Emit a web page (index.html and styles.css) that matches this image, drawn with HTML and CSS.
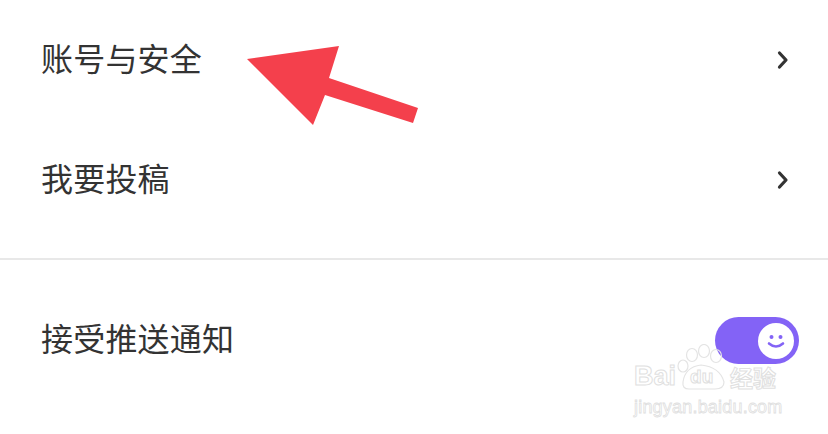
FILE: index.html
```html
<!DOCTYPE html>
<html lang="zh-CN">
<head>
<meta charset="utf-8">
<link rel="stylesheet" href="styles.css">
</head>
<body>
<div class="page">
  <section class="group">
    <div class="row">
      <span class="label">账号与安全</span>
      <svg class="chev" width="14" height="20" viewBox="0 0 14 20"><path d="M3.5 3 L10 10 L3.5 17" fill="none" stroke="#333" stroke-width="3.2" stroke-linecap="round" stroke-linejoin="round"/></svg>
    </div>
    <div class="row">
      <span class="label">我要投稿</span>
      <svg class="chev" width="14" height="20" viewBox="0 0 14 20"><path d="M3.5 3 L10 10 L3.5 17" fill="none" stroke="#333" stroke-width="3.2" stroke-linecap="round" stroke-linejoin="round"/></svg>
    </div>
  </section>
  <div class="divider"></div>
  <section class="group">
    <div class="row">
      <span class="label">接受推送通知</span>
      <div class="toggle">
        <div class="knob">
          <svg width="36" height="36" viewBox="0 0 36 36">
            <circle cx="13.5" cy="14" r="2" fill="#8363f6"/>
            <circle cx="22.5" cy="14" r="2" fill="#8363f6"/>
            <path d="M11 20.5 Q18 26.5 25 20.5" fill="none" stroke="#8363f6" stroke-width="2.6" stroke-linecap="round"/>
          </svg>
        </div>
      </div>
    </div>
  </section>
</div>

<svg class="arrow" width="828" height="434" viewBox="0 0 828 434">
  <polygon points="247,59 339,46 329,78 418,108 413,123 325,95 313,125" fill="#f4404c"/>
</svg>

<div class="watermark">
  <div class="wm-top">
    <span class="wm-bai">Bai</span>
    <span class="wm-paw">
      <svg width="54" height="46" viewBox="0 0 54 46">
        <ellipse cx="16" cy="11" rx="5.5" ry="6.5" fill="none" stroke="#e4e4e4" stroke-width="1.2"/>
        <ellipse cx="28" cy="7" rx="5.5" ry="6.5" fill="none" stroke="#e4e4e4" stroke-width="1.2"/>
        <ellipse cx="40" cy="12" rx="5.5" ry="6.5" fill="none" stroke="#e4e4e4" stroke-width="1.2"/>
        <ellipse cx="7" cy="22" rx="5" ry="6" fill="none" stroke="#e4e4e4" stroke-width="1.2"/>
        <path d="M7 38 Q9 23 25 21 Q44 23 48 38 Q48 45 39 45 L13 45 Q6 45 7 38 Z" fill="none" stroke="#e4e4e4" stroke-width="1.2"/>
      </svg>
      <span class="wm-du">du</span>
    </span>
    <span class="wm-cn">经验</span>
  </div>
  <div class="wm-url">jingyan.baidu.com</div>
</div>
</body>
</html>
```

FILE: styles.css
```css
html, body {
  margin: 0;
  padding: 0;
  background: #ffffff;
}

body {
  width: 828px;
  height: 434px;
  overflow: hidden;
  position: relative;
  font-family: "Noto Sans CJK SC", "Noto Sans", sans-serif;
}

.page {
  display: flex;
  flex-direction: column;
}

.group {
  display: flex;
  flex-direction: column;
}

.row {
  height: 120px;
  display: flex;
  align-items: center;
  justify-content: space-between;
  padding: 0 38px 0 41px;
}

.label {
  font-size: 32px;
  color: #333333;
  letter-spacing: 0.2px;
  margin-bottom: 6px;
}

.chev {
  display: block;
}

.divider {
  height: 2px;
  background: #e8e8e8;
  margin: 18px 0 20px;
}

.toggle {
  width: 84px;
  height: 47px;
  border-radius: 24px;
  background: #8363f6;
  display: flex;
  align-items: center;
  justify-content: flex-end;
  padding-right: 5px;
  box-sizing: border-box;
  margin-right: -9px;
  margin-top: 1px;
}

.knob {
  width: 36px;
  height: 36px;
  border-radius: 50%;
  background: #ffffff;
  display: flex;
}

.arrow {
  position: absolute;
  left: 0;
  top: 0;
  pointer-events: none;
}

.watermark {
  position: absolute;
  left: 634px;
  top: 342px;
  width: 160px;
  font-family: "Liberation Sans", Arial, sans-serif;
  color: transparent;
  pointer-events: none;
}

.wm-top {
  display: flex;
  align-items: flex-end;
  height: 48px;
}

.wm-bai {
  font-size: 27px;
  font-weight: bold;
  -webkit-text-stroke: 1px #e0e0e0;
  line-height: 1;
  margin-bottom: 0;
}

.wm-paw {
  position: relative;
  width: 54px;
  height: 46px;
  margin-left: 0;
}

.wm-paw svg {
  position: absolute;
  left: 0;
  top: 0;
}

.wm-du {
  position: absolute;
  left: 14px;
  top: 23px;
  font-size: 19px;
  font-weight: bold;
  -webkit-text-stroke: 1px #e0e0e0;
  line-height: 1;
}

.wm-cn {
  font-family: "Noto Sans CJK SC", sans-serif;
  font-size: 23px;
  font-weight: bold;
  -webkit-text-stroke: 1px #e0e0e0;
  line-height: 1;
  margin-bottom: 1px;
}

.wm-url {
  font-size: 18px;
  -webkit-text-stroke: 0.8px #e0e0e0;
  margin-top: 8px;
  line-height: 1;
  letter-spacing: 0.2px;
}
```
